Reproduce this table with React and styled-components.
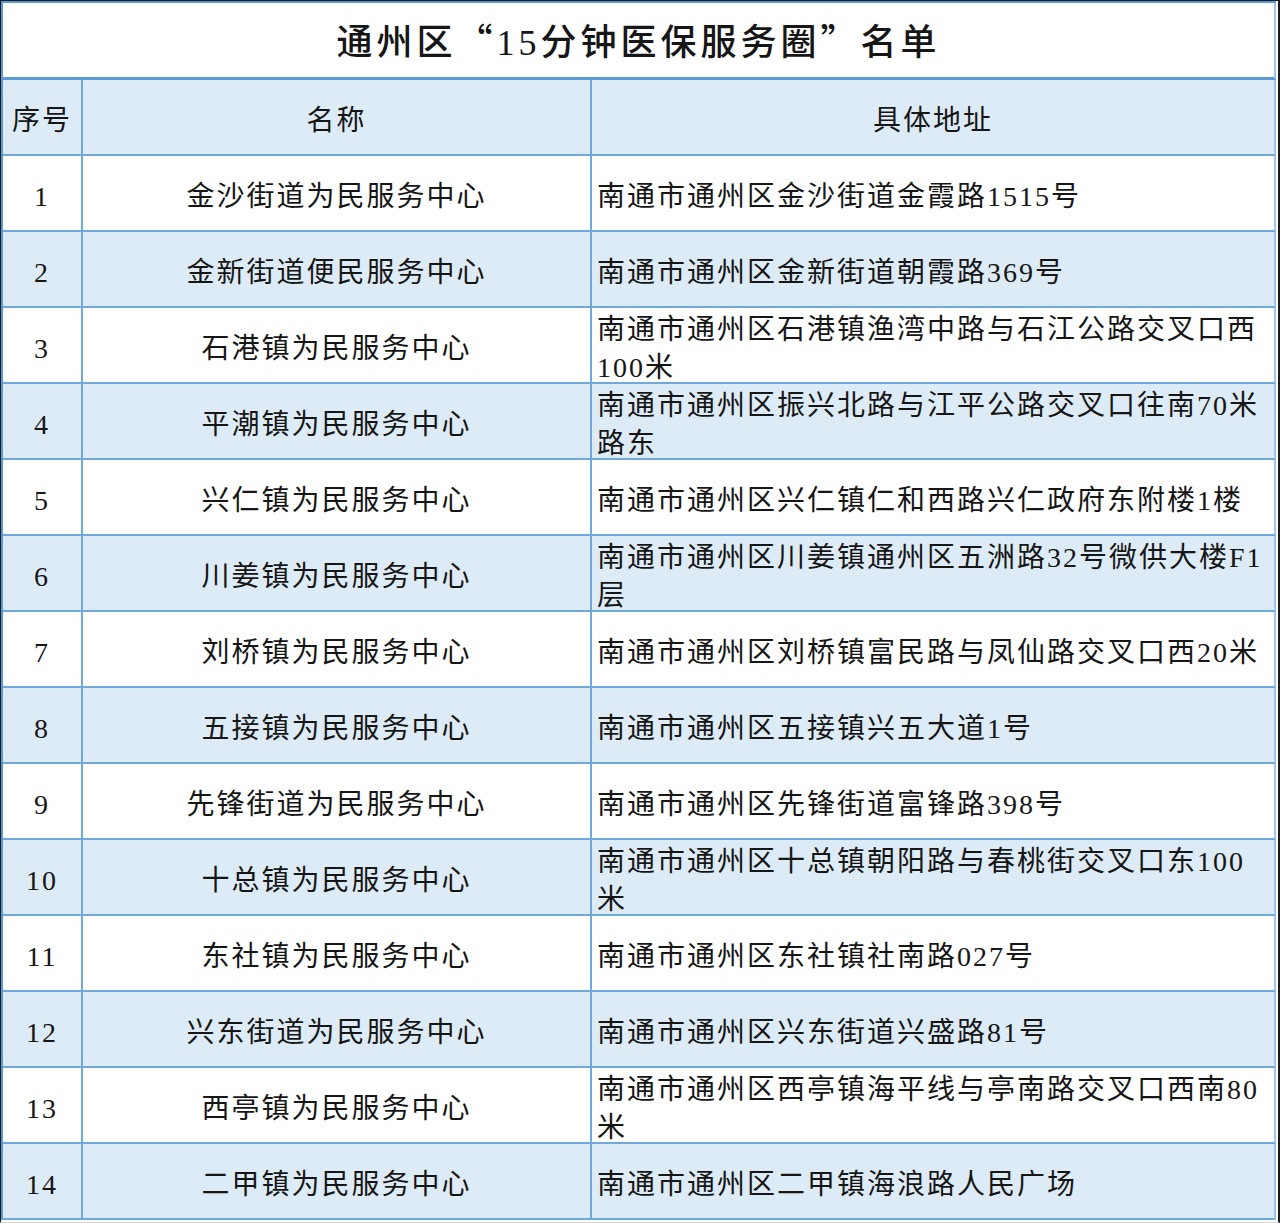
import React from "react";
import styled, { createGlobalStyle } from "styled-components";

const Global = createGlobalStyle`
  html, body { margin: 0; padding: 0; background: #ffffff; }
  body { font-family: "Liberation Serif", "Noto Sans CJK SC", serif; }
`;

const Frame = styled.div`
  width: 1280px;
  height: 1223px;
  box-sizing: border-box;
  background: #ffffff;
  border-top: 1px solid #1b1b1b;
  border-left: 1px solid #1b1b1b;
  border-right: 2px solid #1b1b1b;
  border-bottom: 1px solid #d6d6d6;
  padding-right: 2px;
  padding-bottom: 2px;
`;

const Grid = styled.div`
  display: grid;
  grid-template-columns: 80px 509px 1fr;
  border-top: 2px solid #5b9bd5;
  border-left: 2px solid #5b9bd5;
  color: #161616;
  font-family: "Liberation Serif", "Noto Sans CJK SC", serif;
`;

const Title = styled.div`
  grid-column: 1 / -1;
  height: 77px;
  box-sizing: border-box;
  border-bottom: 3px solid #5b9bd5;
  border-right: 2px solid #9fc5e8;
  display: flex;
  align-items: center;
  justify-content: center;
  font-size: 36px;
  font-weight: 500;
  letter-spacing: 4px;
  padding-bottom: 2px;
  background: #ffffff;
`;

const Quote = styled.span`
  font-family: "Noto Sans CJK SC", sans-serif;
`;

const Cell = styled.div`
  height: 76px;
  box-sizing: border-box;
  border-right: 2px solid ${(p) => (p.$last ? "#9fc5e8" : "#6fa8dc")};
  border-bottom: 2px solid #6fa8dc;
  background: ${(p) => (p.$shade ? "#ddebf7" : "#ffffff")};
  display: flex;
  align-items: center;
  justify-content: ${(p) => (p.$left ? "flex-start" : "center")};
  text-align: ${(p) => (p.$left ? "left" : "center")};
  padding: ${(p) => (p.$left ? "7px 10px 0 5px" : "7px 0 0 0")};
  font-size: 28px;
  line-height: 38px;
  letter-spacing: 2px;
  font-weight: 400;
`;

const rows = [
  ["金沙街道为民服务中心", "南通市通州区金沙街道金霞路1515号"],
  ["金新街道便民服务中心", "南通市通州区金新街道朝霞路369号"],
  ["石港镇为民服务中心", "南通市通州区石港镇渔湾中路与石江公路交叉口西100米"],
  ["平潮镇为民服务中心", "南通市通州区振兴北路与江平公路交叉口往南70米路东"],
  ["兴仁镇为民服务中心", "南通市通州区兴仁镇仁和西路兴仁政府东附楼1楼"],
  ["川姜镇为民服务中心", "南通市通州区川姜镇通州区五洲路32号微供大楼F1层"],
  ["刘桥镇为民服务中心", "南通市通州区刘桥镇富民路与凤仙路交叉口西20米"],
  ["五接镇为民服务中心", "南通市通州区五接镇兴五大道1号"],
  ["先锋街道为民服务中心", "南通市通州区先锋街道富锋路398号"],
  ["十总镇为民服务中心", "南通市通州区十总镇朝阳路与春桃街交叉口东100米"],
  ["东社镇为民服务中心", "南通市通州区东社镇社南路027号"],
  ["兴东街道为民服务中心", "南通市通州区兴东街道兴盛路81号"],
  ["西亭镇为民服务中心", "南通市通州区西亭镇海平线与亭南路交叉口西南80米"],
  ["二甲镇为民服务中心", "南通市通州区二甲镇海浪路人民广场"],
];

export default function App() {
  return (
    <>
      <Global />
      <Frame lang="zh-CN">
        <Grid>
          <Title>
            通州区<Quote>“</Quote>15分钟医保服务圈<Quote>”</Quote>名单
          </Title>
          <Cell $shade>序号</Cell>
          <Cell $shade>名称</Cell>
          <Cell $shade $last>具体地址</Cell>
          {rows.map(([name, addr], i) => {
            const shade = i % 2 === 1;
            return (
              <React.Fragment key={i}>
                <Cell $shade={shade}>{i + 1}</Cell>
                <Cell $shade={shade}>{name}</Cell>
                <Cell $shade={shade} $left $last>
                  {addr}
                </Cell>
              </React.Fragment>
            );
          })}
        </Grid>
      </Frame>
    </>
  );
}
